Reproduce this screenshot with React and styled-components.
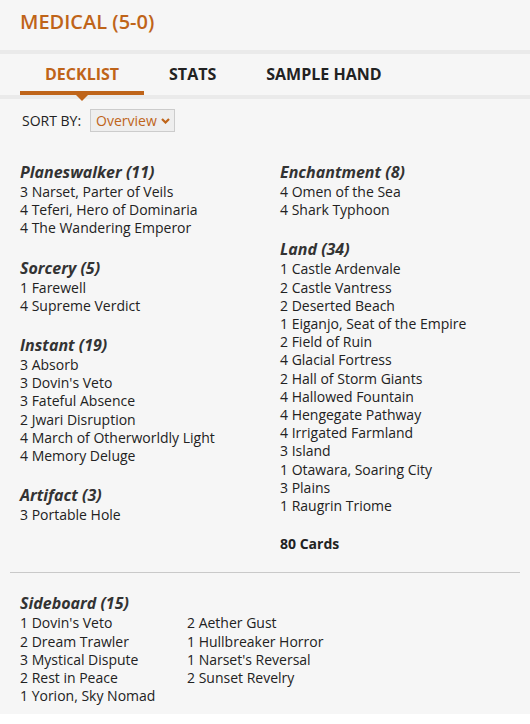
import React from "react";
import styled, { createGlobalStyle } from "styled-components";

const ORANGE = "#bf6419";

const Global = createGlobalStyle`
  html, body { margin: 0; padding: 0; background: #ffffff; }
  body { font-family: "Open Sans", "Liberation Sans", sans-serif; color: #222; }
  * { box-sizing: border-box; }
`;

const Panel = styled.div`
  width: 530px;
  background: #f6f6f6;
  padding: 10px 0 9px;
`;

const Title = styled.h1`
  margin: 0 0 16px;
  padding: 0 20px;
  font-size: 20px;
  line-height: 24px;
  font-weight: 600;
  color: ${ORANGE};
`;

const Band = styled.div`
  height: 4px;
  background: #eaeaea;
`;

const Tabs = styled.div`
  display: flex;
  padding: 0 20px;
`;

const Tab = styled.div`
  position: relative;
  padding: 10px 25px 6px;
  font-size: 16px;
  line-height: 21px;
  font-weight: 700;
  color: ${(p) => (p.$active ? ORANGE : "#222")};
  border-bottom: 4px solid ${(p) => (p.$active ? ORANGE : "transparent")};
  &::after {
    content: "";
    display: ${(p) => (p.$active ? "block" : "none")};
    position: absolute;
    left: 50%;
    bottom: -10px;
    margin-left: -6px;
    border-left: 6px solid transparent;
    border-right: 6px solid transparent;
    border-top: 6px solid ${ORANGE};
  }
`;

const SortRow = styled.div`
  display: flex;
  align-items: center;
  gap: 9px;
  padding: 10px 22px 0;
`;

const SortLabel = styled.span`
  font-size: 14px;
  font-weight: 500;
  color: #222;
`;

const Select = styled.div`
  display: flex;
  align-items: center;
  gap: 4px;
  height: 23px;
  padding: 0 4px 0 5px;
  border: 1px solid #cccccc;
  background: #eeeeee;
  color: ${ORANGE};
  font-size: 14px;
`;

const Columns = styled.div`
  display: grid;
  grid-template-columns: 260px 1fr;
  padding: 30px 20px 0;
`;

const Column = styled.div`
  display: flex;
  flex-direction: column;
  gap: 20px;
`;

const Section = styled.div`
  display: flex;
  flex-direction: column;
`;

const Heading = styled.div`
  font-size: 16px;
  line-height: 21px;
  font-weight: 700;
  font-style: italic;
  color: #333;
`;

const Line = styled.div`
  font-size: 14px;
  line-height: 18.2px;
  color: #222;
  font-weight: ${(p) => (p.$bold ? 700 : 400)};
  white-space: nowrap;
`;

const Divider = styled.hr`
  margin: 19px 10px 20px;
  border: 0;
  height: 1px;
  background: #c9c9c9;
`;

const Sideboard = styled.div`
  padding: 0 20px;
`;

const SideGrid = styled.div`
  display: grid;
  grid-template-columns: 167px 1fr;
`;

const Chevron = () => (
  <svg width="9" height="6" viewBox="0 0 9 6" aria-hidden="true">
    <path d="M1 1l3.5 3.5L8 1" fill="none" stroke={ORANGE} strokeWidth="2.2" />
  </svg>
);

const left = [
  ["Planeswalker (11)", ["3 Narset, Parter of Veils", "4 Teferi, Hero of Dominaria", "4 The Wandering Emperor"]],
  ["Sorcery (5)", ["1 Farewell", "4 Supreme Verdict"]],
  ["Instant (19)", ["3 Absorb", "3 Dovin's Veto", "3 Fateful Absence", "2 Jwari Disruption", "4 March of Otherworldly Light", "4 Memory Deluge"]],
  ["Artifact (3)", ["3 Portable Hole"]],
];

const right = [
  ["Enchantment (8)", ["4 Omen of the Sea", "4 Shark Typhoon"]],
  ["Land (34)", ["1 Castle Ardenvale", "2 Castle Vantress", "2 Deserted Beach", "1 Eiganjo, Seat of the Empire", "2 Field of Ruin", "4 Glacial Fortress", "2 Hall of Storm Giants", "4 Hallowed Fountain", "4 Hengegate Pathway", "4 Irrigated Farmland", "3 Island", "1 Otawara, Soaring City", "3 Plains", "1 Raugrin Triome"]],
];

const side1 = ["1 Dovin's Veto", "2 Dream Trawler", "3 Mystical Dispute", "2 Rest in Peace", "1 Yorion, Sky Nomad"];
const side2 = ["2 Aether Gust", "1 Hullbreaker Horror", "1 Narset's Reversal", "2 Sunset Revelry"];

const renderSection = ([h, items]) => (
  <Section key={h}>
    <Heading>{h}</Heading>
    {items.map((t) => (
      <Line key={t}>{t}</Line>
    ))}
  </Section>
);

export default function App() {
  return (
    <>
      <Global />
      <Panel>
        <Title>MEDICAL (5-0)</Title>
        <Band />
        <Tabs>
          <Tab $active>DECKLIST</Tab>
          <Tab>STATS</Tab>
          <Tab>SAMPLE HAND</Tab>
        </Tabs>
        <Band />
        <SortRow>
          <SortLabel>SORT BY:</SortLabel>
          <Select>
            Overview <Chevron />
          </Select>
        </SortRow>
        <Columns>
          <Column>{left.map(renderSection)}</Column>
          <Column>
            {right.map(renderSection)}
            <Section>
              <Line $bold>80 Cards</Line>
            </Section>
          </Column>
        </Columns>
        <Divider />
        <Sideboard>
          <Heading>Sideboard (15)</Heading>
          <SideGrid>
            <div>
              {side1.map((t) => (
                <Line key={t}>{t}</Line>
              ))}
            </div>
            <div>
              {side2.map((t) => (
                <Line key={t}>{t}</Line>
              ))}
            </div>
          </SideGrid>
        </Sideboard>
      </Panel>
    </>
  );
}
